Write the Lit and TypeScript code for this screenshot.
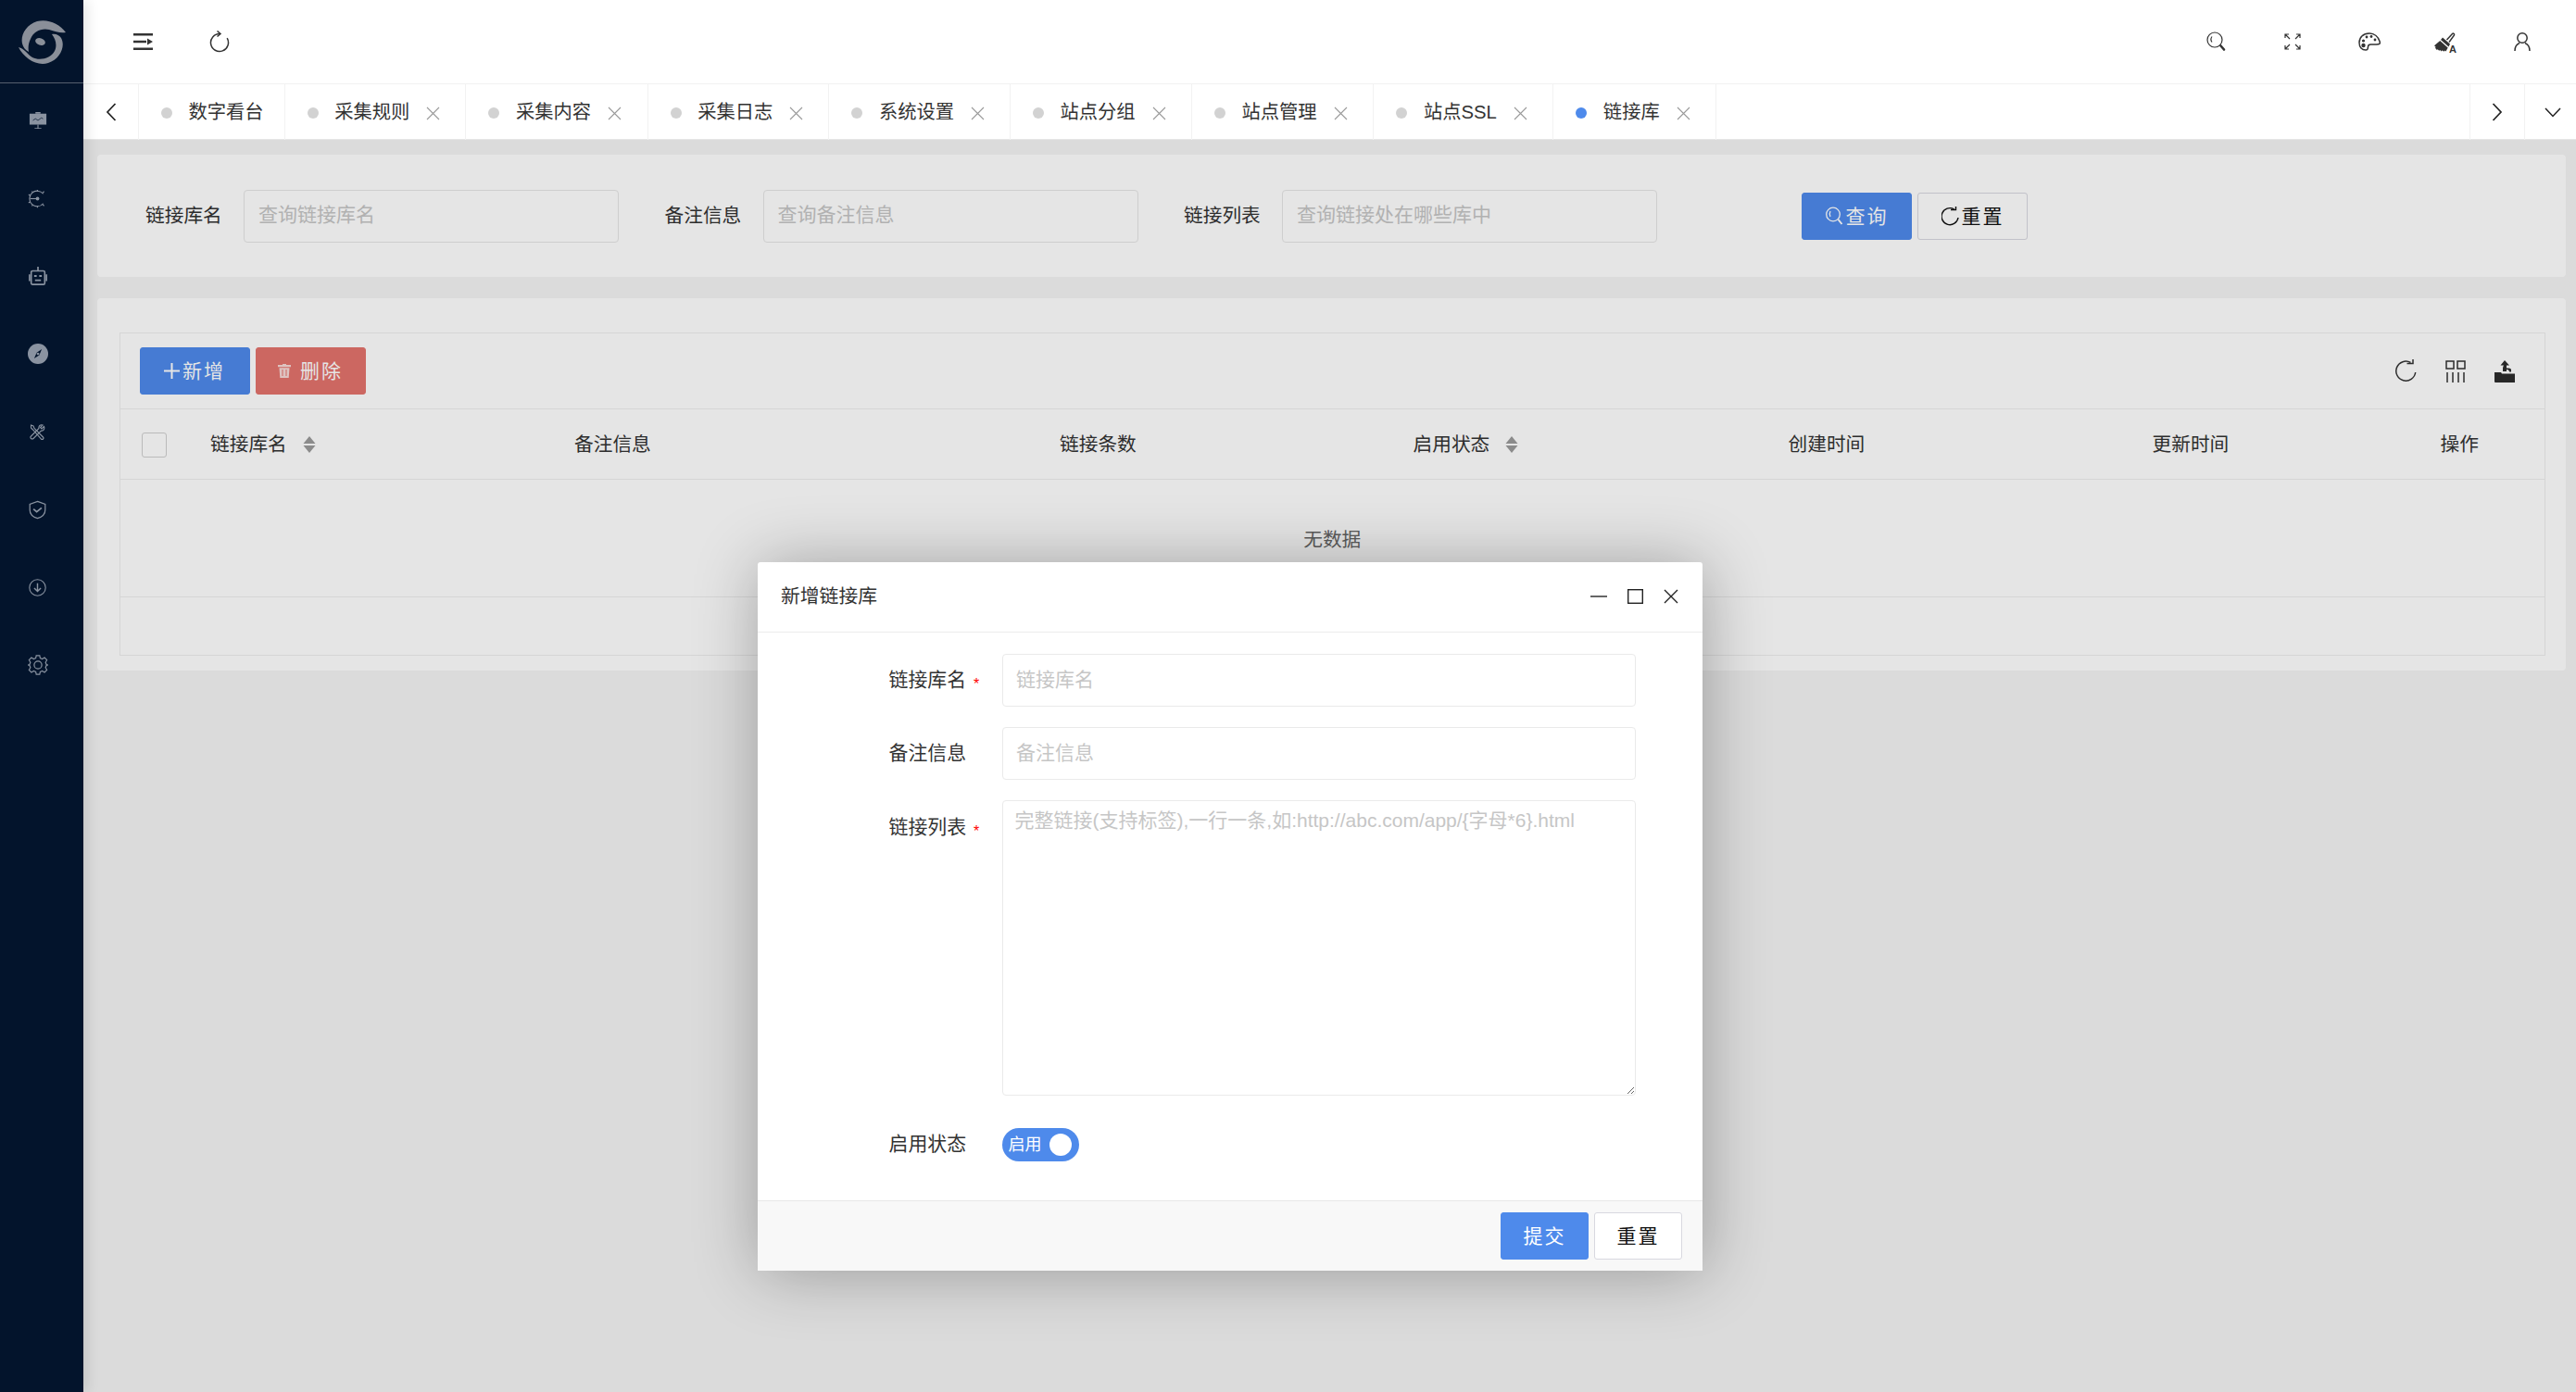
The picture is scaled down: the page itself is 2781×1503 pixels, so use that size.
import { LitElement, html, css, svg } from 'lit';
import { customElement } from 'lit/decorators.js';

const icon = (w: number, h: number, body: unknown, dw = w, dh = h) => html`<svg width=${dw} height=${dh} viewBox="0 0 ${w} ${h}" fill="none">${body}</svg>`;

const logo = icon(51, 47, svg`
  <g fill="currentColor">
    <path d="M51 13C44 3 31-2 20 1 8 5 2 16 4 25c1 4 3 7 7 9-1-5 0-10 2-14 3-8 12-12 20-10 7 2 12 4 18 3Z"/>
    <path d="M0 29c6 12 20 21 32 17 13-4 19-18 14-27-2-3-6-5-10-4 4 5 6 12 3 18-4 8-16 11-24 7-5-3-9-10-15-11Z"/>
    <ellipse cx="23.500" cy="23" rx="5.500" ry="3.800" transform="rotate(18 23.500 23)"/>
  </g>`);

const navIcons = [
  icon(22, 22, svg`<path fill="currentColor" d="M1 3h20v13H1Z"/><path fill="currentColor" d="M8 3V1h6v2ZM10.400 16h1.200v4h-1.200ZM7 20h8v1H7Z"/><path stroke="#03142c" stroke-width=".8" d="M5 11l3-2 3 2 4-3 2 1"/>`, 20, 20),
  icon(24, 24, svg`<g stroke="currentColor" stroke-width="1.300"><path d="M19 6A9.500 9.500 0 1 0 19 18"/><path d="M3 12h9"/><path d="M12 1v2M5 3l1.500 1.500M1 7l2 1M1 17l2-1M5 21l1.500-1.500M12 23v-2M20 3l-1.500 2M20 21l-1.500-2"/></g><circle cx="12" cy="12" r="2.200" fill="currentColor"/>`, 21, 21),
  icon(24, 24, svg`<g stroke="currentColor" stroke-width="1.800"><rect x="4" y="6" width="16" height="16" rx="1.500"/><path d="M12 1v5M2 10v8M22 10v8M8.500 17h7"/></g><path fill="currentColor" d="M7.500 11h3v2h-3ZM13.500 11h3v2h-3Z"/>`, 22, 22),
  icon(24, 24, svg`<circle cx="12" cy="12" r="12" fill="currentColor"/><path fill="#03142c" d="M16.500 6.500 13.500 13.500 7.500 17.500 10.500 10.500Zm-4.500 4a1.500 1.500 0 1 0 .1 0Z"/>`, 22, 22),
  icon(17, 17, svg`<g stroke="currentColor" stroke-width="1.100">
    <path d="M1.500 1 4 2l1 2.500L14.500 14a1.400 1.400 0 0 1-2 2L3.500 6l-2-2Z"/>
    <path d="M15.500 2.500 13 5l-1.500-1.500L14 1C11.500.2 9.500 2 10 4.500L1.500 13A1.700 1.700 0 0 0 4 15.500L12.500 7C15 7.500 16.500 5 15.500 2.500Z"/>
  </g>`),
  icon(24, 24, svg`<g stroke="currentColor" stroke-width="1.400"><path d="M12 1.500 21.500 5v7c0 5.500-4.500 9-9.500 10.500C7 21 2.500 17.500 2.500 12V5Z"/><path stroke-width="2" d="M7 11l4 3.500 6-5"/></g>`, 21, 21),
  icon(24, 24, svg`<g stroke="currentColor" stroke-width="1.400"><circle cx="12" cy="12" r="11"/><path stroke-width="1.800" d="M12 6v11M7.500 12.500 12 17l4.500-4.500"/></g>`, 19, 19),
  icon(24, 24, svg`<g stroke="currentColor" stroke-width="1.300"><circle cx="12" cy="12" r="4.500"/><path d="M10 1h4l.6 3 2.500 1 2.600-1.600 2.800 2.800L20.900 9l1 2.500 2 .5-2 .5-1 2.500 1.600 2.800-2.800 2.800-2.600-1.600-2.500 1-.6 3h-4l-.6-3-2.500-1-2.600 1.600-2.800-2.800L3.100 15l-1-2.500-2-.5 2-.5 1-2.500-1.600-2.800 2.800-2.800L6.900 5l2.500-1Z"/></g>`, 22, 22),
];

const hamburger = icon(21, 18, svg`<path fill="#333" d="M0 0h21v2.400H0ZM0 7.800h14v2.400H0ZM15 5.500 21 9l-6 3.500ZM0 15.600h21V18H0Z"/>`);
const reload = icon(22, 24, svg`<g stroke="#333" stroke-width="1.500"><path d="M11 3.500A9.500 9.500 0 1 0 19.200 8.200"/><path d="M8.500.5 12 3.500 8.500 6.500"/></g>`);

const searchIcon = icon(21, 22, svg`<g stroke="#333" stroke-width="1.200"><circle cx="9" cy="9" r="8"/><path d="M6 5.500c-1.500 2-1.500 4 0 6"/><path stroke-width="2.600" stroke-linecap="round" d="M15.500 15.500l3.500 4"/></g>`);
const fullIcon = icon(18, 18, svg`<g stroke="#333" stroke-width="1.200"><path d="M1 5V1h4M1 1l5 5M13 1h4v4M17 1l-5 5M1 13v4h4M1 17l5-5M13 17h4v-4M17 17l-5-5"/></g>`);
const paletteIcon = icon(24, 20, svg`<path stroke="#333" stroke-width="1.500" d="M12 1C5 1 1 5.500 1 11c0 5 3 8 7 8 2.500 0 2.500-2 2.500-3.500s1-2.500 3-2.500h6c3 0 4.500-.5 3.500-3.500C21.500 5 17.500 1 12 1Z"/><g fill="#333"><circle cx="5.500" cy="9" r="1.600"/><circle cx="9" cy="5" r="1.400"/><circle cx="14" cy="4.500" r="1.400"/><circle cx="18" cy="8" r="1.400"/><circle cx="5.500" cy="14" r="2.200"/></g>`);
const brushIcon = icon(25, 24, svg`
  <path fill="#333" d="M9 7.500l8 7-1.500 3-8.500-7.500Z"/>
  <path fill="#333" d="M6.200 11 14.700 18.500l-2.200 4-1.300-1-.9 1.200-1.600-1.400-.9 1.100-1.600-1.500-1 .9-1.500-1.500-.9.800L1 18.700l.6-1-1.600-1.400Z"/>
  <path stroke="#333" stroke-width="1.500" d="M13.500 10 19.500 3.500c1-1 2.500 0 2 1.500l-5.500 7.500"/>
  <text x="16" y="23.500" font-size="11" font-weight="700" fill="#333" font-family="Liberation Sans">A</text>`);
const userIcon = icon(18, 20, svg`<g stroke="#333" stroke-width="1.500"><circle cx="9" cy="6" r="5.200"/><path d="M1 20c0-5 2.500-7.500 5-8.500M17 20c0-5-2.500-7.500-5-8.500"/></g>`);

const chevLeft = icon(12, 20, svg`<path stroke="#222" stroke-width="1.700" d="M10.500 1 2 10l8.500 9"/>`);
const chevRight = icon(12, 20, svg`<path stroke="#222" stroke-width="1.700" d="M1.500 1 10 10l-8.500 9"/>`);
const chevDown = icon(18, 11, svg`<path stroke="#222" stroke-width="1.500" d="M1 1l8 8.500L17 1"/>`);
const closeX = icon(15, 15, svg`<path stroke="#9a9a9a" stroke-width="1.100" d="M1 1l13 13M14 1 1 14"/>`);

const btnSearch = icon(19, 21, svg`<g stroke="currentColor" stroke-width="1.300"><circle cx="8" cy="8.500" r="7.300"/><path d="M5 5c-1 2-1 4 0 6"/><path stroke-width="2" d="M13.500 14l4 5"/></g>`);
const btnReload = icon(19, 21, svg`<g stroke="currentColor" stroke-width="1.400"><path d="M13.500 2.800A9 9 0 1 0 18 12"/><path d="M10 3.500h5.500V0"/></g>`);
const btnPlus = icon(17, 17, svg`<path stroke="currentColor" stroke-width="2" d="M8.500 0v17M0 8.500h17"/>`);
const btnTrash = icon(14, 15, svg`<path fill="currentColor" fill-opacity=".72" d="M5 0h4v1h5v2.200H0V1h5ZM1.500 4.200h11l-.8 10.800H2.300Z"/><path stroke="#e4736d" d="M5 6v7M9 6v7"/>`);
const sortIcon = icon(14, 18, svg`<path fill="#9b9b9b" d="M7 0l6.500 8H.5ZM.5 10h13L7 18Z"/>`);

const toolReload = icon(24, 25, svg`<g stroke="#333" stroke-width="1.500"><path d="M17.500 3.500A10.500 10.500 0 1 0 22.700 14"/><path d="M13.500 4.500H20V0"/></g>`);
const toolCols = icon(22, 24, svg`<g stroke="#333" stroke-width="1.500"><rect x="1" y="1" width="8" height="8"/><rect x="13" y="1" width="8" height="8"/><path d="M2 13v11M8 13v11M14 13v11M20 13v11"/></g>`);
const toolExport = icon(22, 24, svg`<path fill="#2c2c2c" d="M11 0l5 5.500h-3v3c3 0 5 0 5 2v2h-2c0-2-2-2.500-3-2.500v2H9V8.500c0-1 .5-2 1-3H6.500ZM0 13h7l1 1.500h14V24H1a1 1 0 0 1-1-1Z"/>`);

const tabs = [
  { name: '数字看台', w: 157.7, close: false },
  { name: '采集规则', w: 195.7, close: true },
  { name: '采集内容', w: 196.4, close: true },
  { name: '采集日志', w: 195.7, close: true },
  { name: '系统设置', w: 195.5, close: true },
  { name: '站点分组', w: 196, close: true },
  { name: '站点管理', w: 196.5, close: true },
  { name: '站点SSL', w: 193.9, close: true },
  { name: '链接库', w: 176, close: true, active: true },
];

const cols = [
  { name: '链接库名', sort: true },
  { name: '备注信息' },
  { name: '链接条数' },
  { name: '启用状态', sort: true },
  { name: '创建时间' },
  { name: '更新时间' },
  { name: '操作' },
];

@customElement('app-root')
export class AppRoot extends LitElement {
  static styles = css`
    :host {
      display: block;
      font-family: "Liberation Sans", "Noto Sans CJK SC", sans-serif;
      color: #333;
      line-height: 1;
    }
    .app { position: relative; display: flex; height: 1503px; overflow: hidden; }

    .side { width: 90px; flex: none; background: #03142c; color: #8a93a1; box-shadow: 3px 0 14px rgba(0,0,0,.12); z-index: 2; }
    .logo { height: 90px; border-bottom: 1px solid #565f6e; display: flex; justify-content: center; padding-top: 22px; box-sizing: border-box; color: #8a8f99; }
    .nav { display: flex; align-items: center; justify-content: center; height: 84px; padding: 0 9px 4px 0; box-sizing: border-box; }

    .main { flex: 1; display: flex; flex-direction: column; min-width: 0; }
    .top { height: 90px; flex: none; display: flex; align-items: center; padding: 0 17.250px 0 23px; box-sizing: border-box; }
    .top .cell { width: 82.500px; display: flex; justify-content: center; }
    .spacer { flex: 1; }

    .tabs { height: 61px; flex: none; display: flex; border-top: 1px solid #f2f2f2; box-sizing: border-box; font-size: 20.300px; box-shadow: inset 0 -1px 0 #e6e6e6; }
    .arrow { width: 60px; display: flex; align-items: center; justify-content: center; border-right: 1px solid #f2f2f2; flex: none; box-sizing: border-box; }
    .arrow.r { width: 59px; border-left: 1px solid #f2f2f2; border-right: 0; }
    .arrow.d { width: 56px; border-left: 1px solid #f2f2f2; border-right: 0; padding-left: 5px; }
    .tab { display: flex; align-items: center; padding-left: 24px; border-right: 1px solid #f2f2f2; box-sizing: border-box; flex: none; }
    .dot { width: 12px; height: 12px; border-radius: 50%; background: #d2d2d2; margin-right: 17.500px; margin-top: 2px; }
    .tab.active .dot { background: #4e8aeb; }
    .tab svg { margin-left: 18px; margin-top: 2px; }

    .content { position: relative; flex: 1; background: #f4f4f4; padding: 16px 11px 0 15px; }
    .mask { position: absolute; inset: 0; background: rgba(0,0,0,.1); z-index: 1; }
    .card { background: #fff; border-radius: 4px; }

    .query { height: 132px; display: flex; align-items: center; padding-left: 52px; font-size: 20.700px; }
    .query label { width: 106px; flex: none; }
    .query input { width: 405px; margin-right: 49.500px; }
    .query .btn:first-of-type { margin-left: 106.500px; }

    input, textarea {
      box-sizing: border-box; height: 57px; border: 1px solid #e6e6e6; border-radius: 4px; background: transparent;
      padding: 0 15px 2px; font: inherit; font-size: 21px; color: #333; outline: none;
    }
    input::placeholder, textarea::placeholder { color: #c6c6c6; }

    .btn {
      box-sizing: border-box; width: 119px; height: 51px; border: 1px solid #d8d8e0; border-radius: 3px; background: #fff; color: #111;
      display: flex; align-items: center; justify-content: center; gap: 3px; font-size: 21px; letter-spacing: 2px; flex: none;
    }
    .btn.blue { background: #4e8aeb; border-color: #4e8aeb; color: #fff; }
    .btn.red { background: #e4736d; border-color: #e4736d; color: #fff; }
    .btn.red svg { margin-right: 7px; }
    .btn + .btn { margin-left: 6px; }

    .list { margin-top: 23px; height: 402px; padding: 37px 22px 16px 23.500px; box-sizing: border-box; }
    .box { height: 349px; border: 1px solid #eee; box-sizing: border-box; display: flex; flex-direction: column; }
    .toolbar { height: 82px; flex: none; border-bottom: 1px solid #eee; display: flex; align-items: center; padding: 0 32px 0 21px; box-sizing: border-box; }
    .toolbar .tools { margin-left: auto; display: flex; gap: 31px; align-items: center; }
    .thead {
      height: 76px; flex: none; border-bottom: 1px solid #eee; box-sizing: border-box; font-size: 20.700px; padding-top: 1px;
      display: grid; grid-template-columns: 97.500px 393px 524px 381.500px 405px 393px 311px 1fr; align-items: center;
    }
    .check { width: 27px; height: 27px; border: 1px solid #d0d0d0; border-radius: 3px; margin-left: 23px; box-sizing: border-box; background: #fff; }
    .th { display: flex; align-items: center; gap: 17px; }
    .empty { height: 127px; flex: none; border-bottom: 1px solid #eee; box-sizing: border-box; display: flex; justify-content: center; padding-top: 55px; font-size: 20.700px; color: #666; }

    .dialog {
      position: absolute; left: 818px; top: 607px; width: 1020px; height: 765px; background: #fff; z-index: 3; border-radius: 3px 3px 0 0;
      box-shadow: 2px 2px 70px rgba(0,0,0,.3); display: flex; flex-direction: column;
    }
    .dhead { height: 76px; flex: none; border-bottom: 1px solid #ececec; box-sizing: border-box; display: flex; align-items: center; padding: 0 26px 1px 25px; font-size: 20.800px; }
    .ctrls { margin-left: auto; display: flex; align-items: center; gap: 22px; }
    .dbody { flex: 1; padding-top: 23px; font-size: 20.900px; }
    .row { display: flex; align-items: center; margin-bottom: 22px; padding-left: 141.500px; }
    .row.top-align { align-items: flex-start; }
    .row .lab { width: 122px; flex: none; display: flex; align-items: center; padding-bottom: 1px; }
    .star { color: #f00; margin: 10px 0 0 8px; font-size: 16px; }
    .row input, .row textarea { width: 684.500px; border-color: #eaeaea; padding-left: 14.500px; }
    .row textarea { height: 319px; padding: 7px 13px 0; line-height: 1.300; resize: both; display: block; }
    .row.top-align .lab { padding-top: 16px; }
    .row.status { margin-top: 35px; }
    .switch { width: 83px; height: 36px; border-radius: 18px; background: #4e8aeb; color: #fff; display: flex; align-items: center; padding-left: 7px; gap: 8px; box-sizing: border-box; font-size: 18px; }
    .knob { width: 24px; height: 24px; border-radius: 50%; background: #fff; }
    .dfoot { height: 76px; flex: none; background: #f8f8f8; border-top: 1px solid #e8e8e8; box-sizing: border-box; display: flex; align-items: center; justify-content: flex-end; padding-right: 22px; }
    .dfoot .btn { width: 95px; }
  `;

  render() {
    return html`
      <div class="app">
        <aside class="side">
          <div class="logo">${logo}</div>
          ${navIcons.map((i) => html`<div class="nav">${i}</div>`)}
        </aside>
        <div class="main">
          <header class="top">
            <div class="cell">${hamburger}</div>
            <div class="cell">${reload}</div>
            <div class="spacer"></div>
            ${[searchIcon, fullIcon, paletteIcon, brushIcon, userIcon].map((i) => html`<div class="cell">${i}</div>`)}
          </header>
          <nav class="tabs">
            <div class="arrow">${chevLeft}</div>
            ${tabs.map((t) => html`
              <div class="tab ${t.active ? 'active' : ''}" style="width:${t.w}px">
                <span class="dot"></span><span>${t.name}</span>${t.close ? closeX : ''}
              </div>`)}
            <div class="spacer"></div>
            <div class="arrow r">${chevRight}</div>
            <div class="arrow d">${chevDown}</div>
          </nav>
          <main class="content">
            <section class="card query">
              <label>链接库名</label><input placeholder="查询链接库名" />
              <label>备注信息</label><input placeholder="查询备注信息" />
              <label>链接列表</label><input placeholder="查询链接处在哪些库中" />
              <div class="btn blue">${btnSearch}查询</div>
              <div class="btn">${btnReload}重置</div>
            </section>
            <section class="card list">
              <div class="box">
                <div class="toolbar">
                  <div class="btn blue">${btnPlus}新增</div>
                  <div class="btn red">${btnTrash}删除</div>
                  <div class="tools">${toolReload}${toolCols}${toolExport}</div>
                </div>
                <div class="thead">
                  <div><div class="check"></div></div>
                  ${cols.map((c) => html`<div class="th">${c.name}${c.sort ? sortIcon : ''}</div>`)}
                </div>
                <div class="empty">无数据</div>
              </div>
            </section>
            <div class="mask"></div>
          </main>
        </div>
        <div class="dialog">
          <div class="dhead">
            新增链接库
            <div class="ctrls">
              ${icon(18, 2, svg`<path stroke="#333" stroke-width="1.500" d="M0 1h18"/>`)}
              ${icon(17, 16, svg`<rect x=".7" y=".7" width="15.600" height="14.600" stroke="#222" stroke-width="1.400"/>`)}
              ${icon(16, 16, svg`<path stroke="#222" stroke-width="1.400" d="M1 1l14 14M15 1 1 15"/>`)}
            </div>
          </div>
          <div class="dbody">
            <div class="row"><div class="lab">链接库名<span class="star">*</span></div><input placeholder="链接库名" /></div>
            <div class="row"><div class="lab">备注信息</div><input placeholder="备注信息" /></div>
            <div class="row top-align"><div class="lab">链接列表<span class="star">*</span></div><textarea placeholder="完整链接(支持标签),一行一条,如:http://abc.com/app/{字母*6}.html"></textarea></div>
            <div class="row status"><div class="lab">启用状态</div><div class="switch">启用<span class="knob"></span></div></div>
          </div>
          <div class="dfoot">
            <div class="btn blue">提交</div>
            <div class="btn">重置</div>
          </div>
        </div>
      </div>
    `;
  }
}
